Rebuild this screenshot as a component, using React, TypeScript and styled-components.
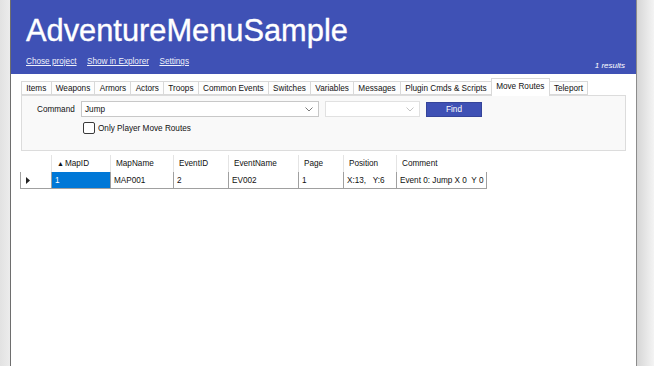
import React from "react";
import styled, { createGlobalStyle } from "styled-components";

const GlobalStyle = createGlobalStyle`
  html, body {
    margin: 0;
    padding: 0;
    height: 100%;
  }
  body {
    font-family: "Liberation Sans", Arial, sans-serif;
    background: linear-gradient(
      to right,
      #e2e2e2 0,
      #ececec 10px,
      #ececec 636px,
      #d6d6d6 637px,
      #f4f4f4 654px
    );
    overflow: hidden;
  }
`;

const tabs = [
  "Items",
  "Weapons",
  "Armors",
  "Actors",
  "Troops",
  "Common Events",
  "Switches",
  "Variables",
  "Messages",
  "Plugin Cmds & Scripts",
  "Move Routes",
  "Teleport",
];

const columns = [
  { title: "MapID", width: 59, sorted: true },
  { title: "MapName", width: 63 },
  { title: "EventID", width: 55 },
  { title: "EventName", width: 70 },
  { title: "Page", width: 45 },
  { title: "Position", width: 53 },
  { title: "Comment", width: 91 },
];

const rows = [["1", "MAP001", "2", "EV002", "1", "X:13,   Y:6", "Event 0: Jump X 0  Y 0"]];

const gridTemplate = `30px ${columns.map((c) => c.width + "px").join(" ")}`;

export default function App() {
  const selectedTab = "Move Routes";
  return (
    <>
      <GlobalStyle />
      <Window>
        <Header>
          <Title>AdventureMenuSample</Title>
          <HeaderBar>
            <Links>
              <HeaderLink href="#">Chose project</HeaderLink>
              <HeaderLink href="#">Show in Explorer</HeaderLink>
              <HeaderLink href="#">Settings</HeaderLink>
            </Links>
            <Results>1 results</Results>
          </HeaderBar>
        </Header>
        <Body>
          <TabStrip>
            {tabs.map((t) => (
              <Tab key={t} selected={t === selectedTab}>
                {t}
              </Tab>
            ))}
          </TabStrip>
          <Panel>
            <FormRow>
              <Label>Command</Label>
              <Select width={238}>
                <span>Jump</span>
                <Chevron />
              </Select>
              <Select width={95} disabled>
                <span />
                <Chevron disabled />
              </Select>
              <FindButton>Find</FindButton>
            </FormRow>
            <CheckRow>
              <CheckBox />
              <span>Only Player Move Routes</span>
            </CheckRow>
          </Panel>
          <Grid>
            <HeaderRow>
              <RowHeaderCell />
              {columns.map((c) => (
                <HeaderCell key={c.title}>
                  {c.sorted && <SortMark>▲</SortMark>}
                  {c.title}
                </HeaderCell>
              ))}
            </HeaderRow>
            {rows.map((r, i) => (
              <DataRow key={i}>
                <RowHeaderCell>
                  <RowArrow />
                </RowHeaderCell>
                {r.map((v, j) => (
                  <Cell key={j} selected={j === 0}>
                    {v}
                  </Cell>
                ))}
              </DataRow>
            ))}
          </Grid>
        </Body>
      </Window>
    </>
  );
}

function Chevron({ disabled }: { disabled?: boolean }) {
  return (
    <svg width="8" height="5" viewBox="0 0 8 5">
      <path
        d="M0.5 0.5 L4 4 L7.5 0.5"
        fill="none"
        stroke={disabled ? "#c4c4c4" : "#7a7a7a"}
        strokeWidth="1"
      />
    </svg>
  );
}

function RowArrow() {
  return (
    <svg width="4" height="7" viewBox="0 0 4 7">
      <path d="M0 0 L4 3.5 L0 7 Z" fill="#222" />
    </svg>
  );
}

const Window = styled.div`
  margin-left: 10px;
  width: 627px;
  height: 100vh;
  box-sizing: border-box;
  background: #fff;
  border-left: 1px solid #6e6e6e;
  border-right: 1px solid #8c8c8c;
`;

const Header = styled.div`
  background: #3f51b5;
  height: 74px;
  box-sizing: border-box;
  padding: 16px 11px 0 15px;
  color: #fff;
`;

const Title = styled.div`
  font-size: 30.8px;
  line-height: 30px;
  -webkit-text-stroke: 0.35px #fff;
`;

const HeaderBar = styled.div`
  display: flex;
  justify-content: space-between;
  align-items: flex-start;
  margin-top: 11px;
`;

const Links = styled.div`
  display: flex;
  gap: 10.5px;
`;

const HeaderLink = styled.a`
  color: #eef0fa;
  font-size: 8.2px;
  line-height: 10px;
  text-decoration: underline;
`;

const Results = styled.span`
  font-size: 8px;
  font-style: italic;
  line-height: 10px;
  padding-top: 4px;
`;

const Body = styled.div`
  padding: 4px 10px 0 10px;
`;

const TabStrip = styled.div`
  display: flex;
  align-items: flex-end;
  height: 17px;
  position: relative;
  z-index: 1;
`;

const Tab = styled.div<{ selected?: boolean }>`
  font-size: 8.2px;
  color: #111;
  white-space: nowrap;
  box-sizing: border-box;
  height: ${({ selected }) => (selected ? "18px" : "14px")};
  line-height: ${({ selected }) => (selected ? "15px" : "14px")};
  padding: 0 4.25px;
  margin-bottom: ${({ selected }) => (selected ? "-1px" : "0")};
  background: ${({ selected }) => (selected ? "#fff" : "#fdfdfd")};
  border: 1px solid #d9d9d9;
  border-bottom: ${({ selected }) => (selected ? "none" : "1px solid #d9d9d9")};
  margin-right: -1px;
`;

const Panel = styled.div`
  background: #f9f9f9;
  border: 1px solid #dcdcdc;
  height: 56px;
  box-sizing: border-box;
  padding: 5px 0 0 15px;
`;

const FormRow = styled.div`
  display: flex;
  align-items: center;
  gap: 6px;
  font-size: 8.2px;
`;

const Label = styled.span`
  color: #111;
  width: 38px;
`;

const Select = styled.div<{ width: number; disabled?: boolean }>`
  width: ${({ width }) => width}px;
  height: 16px;
  box-sizing: border-box;
  display: flex;
  align-items: center;
  justify-content: space-between;
  padding: 0 5px 0 3px;
  background: #fff;
  border: 1px solid ${({ disabled }) => (disabled ? "#e1e1e1" : "#c8c8c8")};
  color: #111;
  font-size: 8.2px;
`;

const FindButton = styled.div`
  width: 56px;
  height: 15px;
  box-sizing: border-box;
  background: #3f51b5;
  border: 1px solid #35449a;
  color: #fff;
  font-size: 8.2px;
  display: flex;
  align-items: center;
  justify-content: center;
`;

const CheckRow = styled.div`
  display: flex;
  align-items: center;
  gap: 3px;
  margin: 5px 0 0 46px;
  font-size: 8.2px;
  color: #111;
`;

const CheckBox = styled.span`
  width: 12px;
  height: 12px;
  box-sizing: border-box;
  border: 1px solid #3a3a3a;
  border-radius: 2px;
  background: #fff;
`;

const Grid = styled.div`
  margin-top: 4px;
  font-size: 8.2px;
  color: #111;
`;

const HeaderRow = styled.div`
  display: grid;
  grid-template-columns: ${gridTemplate};
  height: 17px;
`;

const DataRow = styled.div`
  display: grid;
  grid-template-columns: ${gridTemplate};
  height: 16px;
  width: fit-content;
  border-left: 1px solid #a0a0a0;
  border-bottom: 1px solid #a0a0a0;
  margin-left: -1px;
`;

const HeaderCell = styled.div`
  display: flex;
  align-items: center;
  padding-left: 5px;
  border-left: 1px solid #e4e4e4;
  white-space: nowrap;
`;

const SortMark = styled.span`
  font-size: 7px;
  margin-right: 1px;
`;

const RowHeaderCell = styled.div`
  display: flex;
  align-items: center;
  padding-left: 5px;
`;

const Cell = styled.div<{ selected?: boolean }>`
  display: flex;
  align-items: center;
  padding-left: 3px;
  white-space: pre;
  border-left: 1px solid #a0a0a0;
  background: ${({ selected }) => (selected ? "#0078d7" : "#fff")};
  color: ${({ selected }) => (selected ? "#fff" : "#111")};
  &:last-child {
    border-right: 1px solid #a0a0a0;
  }
`;
